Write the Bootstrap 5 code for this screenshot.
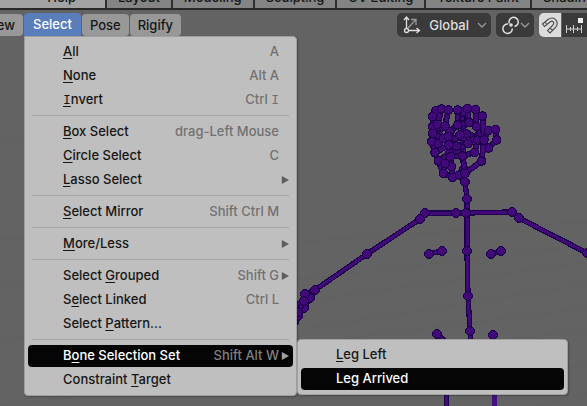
<!DOCTYPE html>
<html lang="en">
<head>
<meta charset="utf-8">
<meta name="viewport" content="width=device-width, initial-scale=1">
<title>Pose mode - Select menu</title>
<link href="https://cdn.jsdelivr.net/npm/bootstrap@5.3.0/dist/css/bootstrap.min.css" rel="stylesheet">
<style>
  body { font: 500 13px/24px Inter, "Liberation Sans", sans-serif; background: #636363; color: #161616; }
  .editor { isolation: isolate; }
  .scene { z-index: -1; top: 0; left: 0; }
  .workspaces { height: 10px; background: #2e2e2e; border-bottom: 2px solid #282828; gap: 2px; }
  .workspaces a { color: #161616; background: #848484; line-height: 22px; padding: 0 11px; white-space: nowrap; }
  .workspaces .app-menus { background: #a3a3a3; width: 105px; padding: 0 29px 0 0; text-align: right; }
  .tool-header { height: 30px; padding-top: 3px; gap: 1px; }
  .tool-group { gap: 5px; }
  .menu-btn { font-size: 13px; font-weight: 500; line-height: 22px; margin-top: 1px; padding: 0 8px; border: 0; border-radius: 4px; background: #989898; color: #161616; }
  .menu-btn.clipped { width: 23px; border-radius: 0 4px 4px 0; }
  .menu-btn.active { background: #5a7ebc; color: #fff; border-radius: 4px 4px 0 0; line-height: 23px; margin: 0; padding: 0 9px; }
  .tool-btn { height: 24px; padding: 0 4px; border: 0; border-radius: 5px; background: #3a3a3a; color: #dedede; font-size: 13px; font-weight: 500; line-height: 23px; }
  .tool-btn:hover { background: #444; }
  .tool-btn.snap-on, .tool-btn.snap-on:hover { background: #dcdcdc; border-radius: 5px 0 0 5px; padding: 0 2px; }
  .tool-btn.snap-to { border-radius: 0; padding: 0 3px 0 2px; margin-left: 1px; }
  .orientation-name { margin: 0 8px; }
  .sheet { font-size: 13px; padding: 3px; background: #bfbfbf; border: 1px solid #a0a0a0; border-radius: 4px; box-shadow: 1px 1px 2px #0004; color: #161616; }
  .sheet li { display: flow-root; }
  .select-sheet { top: 23px; left: 0; width: 273px; border-radius: 0 4px 4px 4px; }
  .sub-sheet { top: -5px; left: calc(100% + 4px); width: 271px; }
  .entry { height: 22px; margin: 1px 0; padding: 0 4px 2px 35px; font-weight: 500; line-height: 20px; color: #161616; border-radius: 4px; display: flex; align-items: center; }
  .entry:hover, .entry.chosen { background: #050505; color: #fff; }
  .entry .keys { color: #717171; margin-left: auto; margin-right: 10px; }
  .entry .keys.has-sub { margin-right: 2px; }
  .entry .tri { width: 8px; height: 8px; margin-top: 2px; background: #5e5e5e; clip-path: polygon(10% 0, 100% 50%, 10% 100%); }
  .entry.chosen .keys { color: #808080; }
  .entry.chosen .tri { background: #a0a0a0; }
  .entry u { text-decoration-thickness: 1px; text-underline-offset: 2px; text-decoration-skip-ink: none; }
  .serif-i { font-family: "Liberation Mono", monospace; line-height: 1; }
  .rule { margin: 3px 4px 4px; border-top: 1px solid #a6a6a6; opacity: 1; }
</style>
<script src="https://cdn.jsdelivr.net/npm/bootstrap@5.3.0/dist/js/bootstrap.bundle.min.js" defer></script>
</head>
<body>
<div class="editor position-relative vh-100 overflow-hidden d-flex flex-column">
  <svg id="scene" class="scene position-absolute" width="587" height="406" viewBox="0 0 587 406" role="img" aria-label="Armature" shape-rendering="crispEdges" fill="none" stroke-linecap="round">
    <path stroke="#606060" d="M297 280L587 245M297 302L587 262M297 330L587 284M297 345L587 308M0 406L587 330M0 240L24 238M0 285L24 282M0 340L24 336M297 242L587 222M0 140L24 139M560 370L587 362M297 400L370 375M540 406L587 392"/>
  </svg>

  <nav class="workspaces d-flex align-items-end overflow-hidden flex-shrink-0" aria-label="Workspaces">
    <a class="app-menus flex-shrink-0 text-decoration-none" href="#">Help</a>
    <a class="text-decoration-none" href="#">Layout</a>
    <a class="text-decoration-none" href="#">Modeling</a>
    <a class="text-decoration-none" href="#">Sculpting</a>
    <a class="text-decoration-none" href="#">UV Editing</a>
    <a class="text-decoration-none" href="#">Texture Paint</a>
    <a class="text-decoration-none" href="#">Shading</a>
  </nav>

  <header class="tool-header d-flex align-items-start flex-shrink-0">
    <button class="menu-btn clipped d-flex justify-content-end overflow-hidden" type="button">View</button>
    <div class="dropdown">
      <button class="menu-btn active d-block" type="button" aria-expanded="true">Select</button>
      <ul class="dropdown-menu show sheet select-sheet m-0">
        <li><button class="dropdown-item entry" type="button"><span><u>A</u>ll</span><span class="keys">A</span></button></li>
        <li><button class="dropdown-item entry" type="button"><span><u>N</u>one</span><span class="keys">Alt A</span></button></li>
        <li><button class="dropdown-item entry" type="button"><span><u class="serif-i">I</u>nvert</span><span class="keys">Ctrl <span class="serif-i">I</span></span></button></li>
        <li><hr class="rule"></li>
        <li><button class="dropdown-item entry" type="button"><span><u>B</u>ox Select</span><span class="keys">drag-Left Mouse</span></button></li>
        <li><button class="dropdown-item entry" type="button"><span><u>C</u>ircle Select</span><span class="keys">C</span></button></li>
        <li><button class="dropdown-item entry" type="button"><span><u>L</u>asso Select</span><span class="keys has-sub"></span><i class="tri"></i></button></li>
        <li><hr class="rule"></li>
        <li><button class="dropdown-item entry" type="button"><span><u>S</u>elect Mirror</span><span class="keys">Shift Ctrl M</span></button></li>
        <li><hr class="rule"></li>
        <li><button class="dropdown-item entry" type="button"><span><u>M</u>ore/Less</span><span class="keys has-sub"></span><i class="tri"></i></button></li>
        <li><hr class="rule"></li>
        <li><button class="dropdown-item entry" type="button"><span>Select <u>G</u>rouped</span><span class="keys has-sub">Shift G</span><i class="tri"></i></button></li>
        <li><button class="dropdown-item entry" type="button"><span>S<u>e</u>lect Linked</span><span class="keys">Ctrl L</span></button></li>
        <li><button class="dropdown-item entry" type="button"><span>Select <u>P</u>attern...</span></button></li>
        <li><hr class="rule"></li>
        <li class="dropend position-relative">
          <button class="dropdown-item entry chosen" type="button" aria-expanded="true"><span>B<u>o</u>ne Selection Set</span><span class="keys has-sub">Shift Alt W</span><i class="tri"></i></button>
          <ul class="dropdown-menu show sheet sub-sheet m-0">
            <li><button class="dropdown-item entry" type="button"><span><u>L</u>eg Left</span></button></li>
            <li><button class="dropdown-item entry chosen" type="button"><span>Leg Arrived</span></button></li>
          </ul>
        </li>
        <li><button class="dropdown-item entry" type="button"><span>Constraint <u>T</u>arget</span></button></li>
      </ul>
    </div>
    <button class="menu-btn" type="button">Pose</button>
    <button class="menu-btn" type="button">Rigify</button>

    <div class="tool-group d-flex ms-auto">
      <button class="tool-btn d-flex align-items-center" type="button">
        <svg width="20" height="20" viewBox="0 0 20 20" fill="none" stroke="#dedede" stroke-width="1.300"><path d="M7 13l7.500-8M10 4.500h5V10" stroke="#999"/><path d="M5.500 13.500V2.500M3 5l2.500-3L8 5M7.500 15.500H18M15.500 13l3 2.500-3 2.500"/><circle cx="5.500" cy="15.500" r="2"/></svg>
        <span class="orientation-name">Global</span>
        <svg width="10" height="8" viewBox="0 0 10 8" fill="none" stroke="#999" stroke-width="1.300"><path d="M1 2l4 4 4-4"/></svg>
      </button>
      <button class="tool-btn d-flex align-items-center" type="button" aria-label="Pivot point">
        <svg width="20" height="20" viewBox="0 0 20 20" fill="none" stroke="#dedede" stroke-width="1.500"><path d="M9.300 8.500A4.600 4.600 0 1 1 14.500 11.500M8 9a4.700 4.700 0 1 0 4.300 4.500"/><circle cx="11" cy="10" r="1.800" fill="#dedede" stroke="none"/></svg>
        <svg width="10" height="8" viewBox="0 0 10 8" fill="none" stroke="#999" stroke-width="1.300"><path d="M1 2l4 4 4-4"/></svg>
      </button>
      <div class="d-flex">
        <button class="tool-btn snap-on d-flex align-items-center" type="button" aria-label="Snap" aria-pressed="true">
          <svg width="18" height="20" viewBox="0 0 18 20" fill="none" stroke="#4a4a4a" stroke-width="1.100"><path d="M1.500 9L7 4.500C14 0 19 8 14 13l-5 5-2.500-2.500 5-5c3-3 0-5.500-2.500-3.500L3.500 11.500zM4 7l2 2.500M9 13l2.500 2.500"/></svg>
        </button>
        <button class="tool-btn snap-to d-flex align-items-center" type="button" aria-label="Snap to increment">
          <svg width="20" height="20" viewBox="0 0 20 20" fill="none" stroke="#cfcfcf" stroke-width="1"><path d="M2.500 10v8M6.500 12v4M9.500 10v8M13.500 12v4M17.500 10v8M2 14h16"/><path fill="#eee" stroke="none" d="M14 3h5v5h-5z"/></svg>
        </button>
      </div>
    </div>
  </header>
</div>
<script>
  // Each chain is a run of joints; bones link neighbouring joints.
  const head = [
    [[68,110],[85,120],[105,108]], [[65,155],[80,125],[82,103]], [[78,62],[68,80],[68,110],[65,155],[75,188],[85,213],[100,250],[127,262]],
    [[143,105],[120,125],[85,160]],
    [[158,66],[158,105],[160,140],[158,198]],
    [[203,140],[170,132],[130,150],[85,135]], [[210,130],[174,161],[140,180],[122,200]], [[68,130],[100,145],[140,168]],
    [[200,110],[215,130],[203,150],[194,187],[158,198],[122,200]], [[75,188],[117,165],[118,190],[85,213]],
    [[217,78],[222,150],[235,122],[257,118],[260,150],[236,174]], [[222,150],[215,213],[165,250]],
    [[122,200],[125,230],[127,262],[148,255],[165,250]], [[100,250],[105,220],[122,200]], [[158,198],[165,250]],
    [[115,140],[117,165]], [[150,135],[174,161]],
    [[95,57],[82,103]], [[115,60],[105,108]], [[143,60],[143,105]], [[172,55],[177,98],[143,105]], [[197,58],[200,110]]
  ].map(c => c.map(([x, y]) => [410 + x / 3, 90 + y / 3]));
  const body = [
    [[464,169],[465,182],[467,199],[467,213]],
    [[467,213],[467,251],[468,296],[470,331],[471,350]],
    [[425,213],[456,213],[466,213],[512,212],[519,218],[587,253]],
    [[425,213],[420,219],[367,254],[315,290]],
    [[315,290],[305,294],[299,306],[296,318]], [[315,290],[310,298],[304,308],[298,316],[294,322]],
    [[305,294],[304,301],[298,312]],
    [[442,251],[429,254]], [[501,251],[491,254]],
    [[437,334],[449,345]], [[493,335],[494,345]]
  ];
  const line = (a, b, w, c) => `<path stroke="${c}" stroke-width="${w}" d="M${a}L${b}"/>`;
  const ball = (p, r, c) => `<circle cx="${p[0]}" cy="${p[1]}" r="${r}" fill="${c}"/>`;
  let out = '';
  const draw = (chains, w, r) => chains.forEach(ch => {
    ch.slice(1).forEach((p, i) => out += line(ch[i], p, w, '#1c004e') + line(ch[i], p, w - 2.4, '#420a78'));
    ch.forEach(p => out += ball(p, r, '#1c004e') + ball(p, r - 1.2, '#420a78'));
  });
  draw(body, 5.4, 4.9);
  draw(head, 6, 4.8);
  out += line([446,390],[446,410],5,'#1c004e') + line([446,390],[446,410],3,'#420a78') + line([494.5,390],[494.5,410],5,'#421080');
  document.getElementById('scene').insertAdjacentHTML('beforeend', out);
</script>
</body>
</html>
